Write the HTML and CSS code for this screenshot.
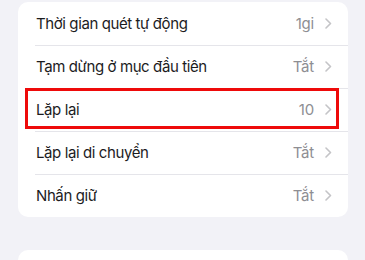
FILE: index.html
```html
<!DOCTYPE html>
<html lang="vi">
<head>
<meta charset="utf-8">
<link rel="stylesheet" href="styles.css">
</head>
<body>
<div class="page">
  <div class="card">
    <div class="row"><span class="label">Thời gian quét tự động</span><span class="value">1gi</span><svg class="chev" viewBox="0 0 7 11"><path d="M1 1l4.5 4.5L1 10"/></svg></div>
    <div class="row"><span class="label">Tạm dừng ở mục đầu tiên</span><span class="value">Tắt</span><svg class="chev" viewBox="0 0 7 11"><path d="M1 1l4.5 4.5L1 10"/></svg></div>
    <div class="row selected"><span class="label">Lặp lại</span><span class="value">10</span><svg class="chev" viewBox="0 0 7 11"><path d="M1 1l4.5 4.5L1 10"/></svg></div>
    <div class="row"><span class="label">Lặp lại di chuyển</span><span class="value">Tắt</span><svg class="chev" viewBox="0 0 7 11"><path d="M1 1l4.5 4.5L1 10"/></svg></div>
    <div class="row"><span class="label">Nhấn giữ</span><span class="value">Tắt</span><svg class="chev" viewBox="0 0 7 11"><path d="M1 1l4.5 4.5L1 10"/></svg></div>
  </div>
  <div class="card next"></div>
</div>
</body>
</html>
```
FILE: styles.css
```css
html, body {
  margin: 0;
  padding: 0;
  background: #f2f2f7;
  height: 100%;
  overflow: hidden;
}
.page {
  padding: 2px 17px 0 18px;
  display: flex;
  flex-direction: column;
  gap: 33px;
  font-family: Inter, "Noto Sans", sans-serif;
}
.card {
  background: #ffffff;
  border-radius: 10px;
}
.row {
  position: relative;
  height: 43px;
  display: flex;
  align-items: center;
  padding: 0 16px 0 18px;
  font-size: 15px;
}
.row + .row::before {
  content: "";
  position: absolute;
  top: 0;
  left: 17px;
  right: 0;
  height: 1px;
  background: #e5e5ea;
}
.label {
  flex: 1;
  color: #1c1c1e;
  letter-spacing: -0.4px;
}
.value {
  color: #8e8e93;
  margin-right: 11px;
  letter-spacing: -0.2px;
}
.chev {
  width: 7px;
  height: 11px;
  fill: none;
  stroke: #c4c4c7;
  stroke-width: 1.6;
  stroke-linecap: round;
  stroke-linejoin: round;
}
.selected::after {
  content: "";
  position: absolute;
  left: 7px;
  right: 9px;
  top: 0;
  bottom: 2px;
  border: 3px solid #ee0a0a;
  pointer-events: none;
}
.next {
  height: 10px;
  border-radius: 10px 10px 0 0;
}
```
